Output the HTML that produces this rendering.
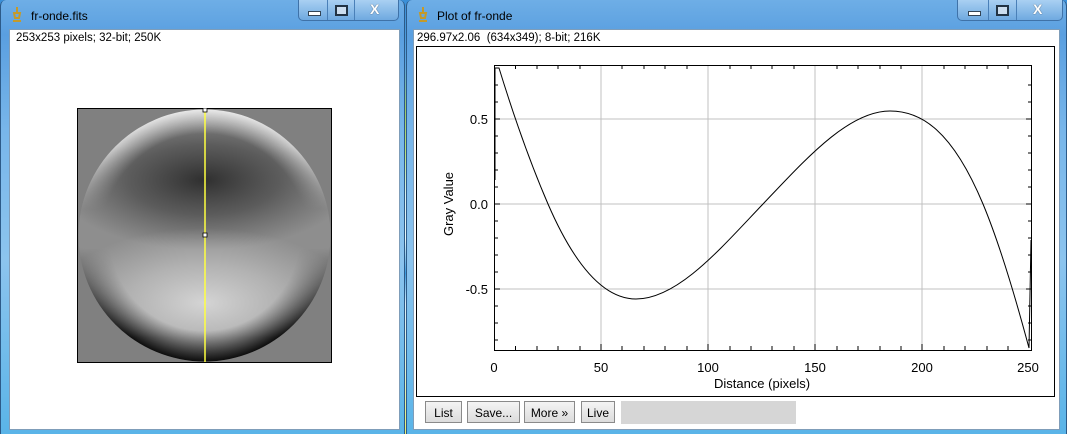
<!DOCTYPE html>
<html><head><meta charset="utf-8"><style>
body{margin:0;width:1067px;height:434px;overflow:hidden;position:relative;font-family:"Liberation Sans",sans-serif;
background:linear-gradient(180deg,#3a8fd8 0%,#5aa6e0 15%,#9cc96a 25%,#b9e07a 35%,#d8f0f0 45%,#e6f6f8 55%,#3b9be0 63%,#d8eef8 70%,#e0f0d0 85%,#e6f070 100%);}
.win{position:absolute;top:0;height:434px;background:linear-gradient(180deg,#6eaee6 0%,#5a9fe0 8%,#78b6ea 30%,#8cc4ee 60%,#5ab4e8 100%);border-left:1px solid #2c5a88;border-right:1px solid #2c5a88;box-sizing:border-box;border-radius:6px 6px 0 0}
.title{position:absolute;top:9px;font-size:12px;color:#000}
.client{position:absolute;background:#fff;border:1px solid #7f9db9}
.caps{position:absolute;top:0;height:21px;border:1px solid #3f72a8;border-top:none;border-radius:0 0 5px 5px;background:linear-gradient(#a9d0f2,#6fa9e0);box-sizing:border-box}
.caps div{position:absolute;top:0;height:20px;border-right:1px solid #4a80b8}
.info{position:absolute;font-size:11.5px;color:#000}
.btn{position:absolute;top:401px;height:22px;border:1px solid #8a8a8a;background:linear-gradient(#f4f4f4,#dcdcdc);font-size:12px;line-height:22px;text-align:center;box-sizing:border-box}
</style></head><body>
<div class="win" style="left:0;width:405px">
  <svg style="position:absolute;left:10px;top:6px" width="12" height="18"><path d="M6 1v6M3 7h6l-1 5H4zM2 15h8" stroke="#c49a2a" stroke-width="2" fill="none"/></svg>
  <div class="title" style="left:30px">fr-onde.fits</div>
  <div class="caps" style="left:297px;width:101px">
    <div style="left:0;width:28px"></div><div style="left:28px;width:27px"></div>
    <span style="position:absolute;left:9px;top:11px;width:11px;height:3px;background:#fff;border:1px solid #345"></span>
    <span style="position:absolute;left:36px;top:5px;width:9px;height:7px;border:2px solid #234;background:#cde"></span>
    <span style="position:absolute;left:71px;top:1px;font-weight:bold;font-size:14px;color:#fff;text-shadow:0 0 1px #234">X</span>
  </div>
  <div class="client" style="left:8px;top:29px;width:389px;height:399px"></div>
  <div class="info" style="left:15px;top:32px">253x253 pixels; 32-bit; 250K</div>
  <svg style="position:absolute;left:76px;top:108px" width="255" height="255">
    <defs>
      <clipPath id="c"><circle cx="127.5" cy="127.5" r="126"/></clipPath>
      <radialGradient id="dk" cx="0.5" cy="0.5" r="0.5">
        <stop offset="0" stop-color="#2a2a2a" stop-opacity="0.95"/><stop offset="0.5" stop-color="#3a3a3a" stop-opacity="0.6"/><stop offset="1" stop-color="#444" stop-opacity="0"/>
      </radialGradient>
      <radialGradient id="lt" cx="0.5" cy="0.5" r="0.5">
        <stop offset="0" stop-color="#d8d8d8" stop-opacity="0.95"/><stop offset="0.5" stop-color="#d0d0d0" stop-opacity="0.55"/><stop offset="1" stop-color="#ccc" stop-opacity="0"/>
      </radialGradient>
      <radialGradient id="edge" cx="0.5" cy="0.5" r="0.5">
        <stop offset="0.8" stop-color="#fff" stop-opacity="0"/><stop offset="1" stop-color="#fff" stop-opacity="0.85"/>
      </radialGradient>
      <radialGradient id="edgeb" cx="0.5" cy="0.5" r="0.5">
        <stop offset="0.75" stop-color="#000" stop-opacity="0"/><stop offset="1" stop-color="#000" stop-opacity="0.95"/>
      </radialGradient>
      <linearGradient id="tb" x1="0" y1="0" x2="0" y2="1">
        <stop offset="0" stop-color="#fff"/><stop offset="0.15" stop-color="#ccc"/><stop offset="0.4" stop-color="#000"/><stop offset="1" stop-color="#000"/>
      </linearGradient>
      <mask id="mt"><rect width="255" height="255" fill="url(#tb)"/></mask>
      <linearGradient id="tb2" x1="0" y1="0" x2="0" y2="1">
        <stop offset="0" stop-color="#000"/><stop offset="0.55" stop-color="#000"/><stop offset="0.9" stop-color="#fff"/><stop offset="1" stop-color="#fff"/>
      </linearGradient>
      <mask id="mb"><rect width="255" height="255" fill="url(#tb2)"/></mask>
    </defs>
    <rect x="0.5" y="0.5" width="254" height="254" fill="#808080" stroke="#000"/>
    <g clip-path="url(#c)">
      <rect width="255" height="255" fill="#8e8e8e"/>
      <ellipse cx="127" cy="72" rx="150" ry="70" fill="url(#dk)"/>
      <ellipse cx="127" cy="195" rx="150" ry="75" fill="url(#lt)"/>
      <circle cx="127.5" cy="127.5" r="127" fill="url(#edge)" mask="url(#mt)"/>
      <circle cx="127.5" cy="127.5" r="127" fill="url(#edgeb)" mask="url(#mb)"/>
    </g>
    <line x1="128" y1="1" x2="128" y2="254" stroke="#ffff40" stroke-width="1.5"/>
    <rect x="126" y="0" width="4" height="4" fill="#fff" stroke="#000" stroke-width="0.8"/>
    <rect x="126" y="125" width="4" height="4" fill="#fff" stroke="#000" stroke-width="0.8"/>
  </svg>
</div>
<div class="win" style="left:406px;width:661px">
  <svg style="position:absolute;left:10px;top:6px" width="12" height="18"><path d="M6 1v6M3 7h6l-1 5H4zM2 15h8" stroke="#c49a2a" stroke-width="2" fill="none"/></svg>
  <div class="title" style="left:30px">Plot of fr-onde</div>
  <div class="caps" style="left:550px;width:106px">
    <div style="left:0;width:30px"></div><div style="left:30px;width:28px"></div>
    <span style="position:absolute;left:10px;top:11px;width:11px;height:3px;background:#fff;border:1px solid #345"></span>
    <span style="position:absolute;left:38px;top:5px;width:9px;height:7px;border:2px solid #234;background:#cde"></span>
    <span style="position:absolute;left:75px;top:1px;font-weight:bold;font-size:14px;color:#fff;text-shadow:0 0 1px #234">X</span>
  </div>
  <div class="client" style="left:6px;top:29px;width:645px;height:399px"></div>
  <div class="info" style="left:10px;top:32px">296.97x2.06&nbsp;&nbsp;(634x349); 8-bit; 216K</div>
</div>
<svg style="position:absolute;left:0;top:0" width="1067" height="434">
  <rect x="416.5" y="46.5" width="638" height="350" fill="#fff" stroke="#000"/>
  <g stroke="#c0c0c0" stroke-width="1">
    <line x1="601" y1="65" x2="601" y2="350"/><line x1="708" y1="65" x2="708" y2="350"/><line x1="815" y1="65" x2="815" y2="350"/><line x1="922" y1="65" x2="922" y2="350"/>
    <line x1="494" y1="119" x2="1032" y2="119"/><line x1="494" y1="204" x2="1032" y2="204"/><line x1="494" y1="289" x2="1032" y2="289"/>
  </g>
  <g stroke="#000" stroke-width="1">
    <path d="M515.5 65v4M537 65v4M558 65v4M580 65v4M622 65v4M644 65v4M665 65v4M687 65v4M730 65v4M751 65v4M772 65v4M794 65v4M837 65v4M858 65v4M880 65v4M901 65v4M944 65v4M965 65v4M987 65v4M1008 65v4"/>
    <path d="M515.5 350v-4M537 350v-4M558 350v-4M580 350v-4M601 350v-6M622 350v-4M644 350v-4M665 350v-4M687 350v-4M708 350v-6M730 350v-4M751 350v-4M772 350v-4M794 350v-4M815 350v-6M837 350v-4M858 350v-4M880 350v-4M901 350v-4M922 350v-6M944 350v-4M965 350v-4M987 350v-4M1008 350v-4"/>
    <path d="M494 85h4M494 102h4M494 136h4M494 153h4M494 170h4M494 187h4M494 221h4M494 238h4M494 255h4M494 272h4M494 306h4M494 323h4M494 340h4M494 119h6M494 204h6M494 289h6"/>
    <path d="M1032 85h-4M1032 102h-4M1032 136h-4M1032 153h-4M1032 170h-4M1032 187h-4M1032 221h-4M1032 238h-4M1032 255h-4M1032 272h-4M1032 306h-4M1032 323h-4M1032 340h-4M1032 119h-6M1032 204h-6M1032 289h-6"/>
  </g>
  <rect x="494.5" y="65.5" width="537" height="285" fill="none" stroke="#000"/>
  <path fill="none" stroke="#000" stroke-width="1" d="M495 180L495 68L499 68C515 120 532 167 548 204C577 271 607 299 636 299C678 299 721 248 763 204C805 160 848 111 890 111C921 111 952 130 983 204C998 240 1014 292 1029 348L1031 240"/>
  <g font-family="Liberation Sans,sans-serif" font-size="13" fill="#000">
    <text x="494" y="372" text-anchor="middle">0</text><text x="601" y="372" text-anchor="middle">50</text><text x="708" y="372" text-anchor="middle">100</text><text x="815" y="372" text-anchor="middle">150</text><text x="922" y="372" text-anchor="middle">200</text><text x="1028" y="372" text-anchor="middle">250</text>
    <text x="762" y="388" text-anchor="middle">Distance (pixels)</text>
    <text x="488" y="124" text-anchor="end">0.5</text><text x="488" y="209" text-anchor="end">0.0</text><text x="488" y="294" text-anchor="end">-0.5</text>
    <text transform="translate(453,204) rotate(-90)" text-anchor="middle">Gray Value</text>
  </g>
</svg>
<div class="btn" style="left:425px;width:37px">List</div>
<div class="btn" style="left:467px;width:53px">Save...</div>
<div class="btn" style="left:524px;width:51px">More »</div>
<div class="btn" style="left:581px;width:34px">Live</div>
<div style="position:absolute;left:621px;top:401px;width:175px;height:23px;background:#d6d6d6"></div>
</body></html>
